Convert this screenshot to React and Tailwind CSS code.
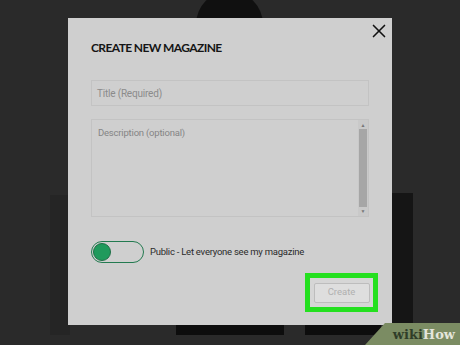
import { X } from "lucide-react";

export default function App() {
  return (
    <div className="relative h-[345px] w-[460px] overflow-hidden bg-[#2a2a2a] font-['Roboto',sans-serif]">
      {/* page behind the dialog */}
      <div className="absolute left-[196px] top-[-9px] h-[67px] w-[67px] rounded-full bg-[#101010]" />
      <div className="absolute left-[50px] top-[195px] h-[140px] w-[20px] bg-[#252525]" />
      <div className="absolute left-[390px] top-[193px] h-[142px] w-[23px] bg-[#151515]" />
      <div className="absolute left-[176px] top-[322px] h-[13px] w-[108px] bg-[#0d0d0d]" />
      <div className="absolute left-[305px] top-[322px] h-[13px] w-[76px] bg-[#0d0d0d]" />

      {/* dialog */}
      <div className="absolute left-[68px] top-[18px] flex h-[307px] w-[324px] flex-col bg-[#cfcfcf] px-[23px]">
        <button className="absolute right-[2px] top-[2px] text-[#111]">
          <X className="h-[22px] w-[22px]" strokeWidth={1.8} />
        </button>
        <h2 className="mt-[22px] font-['Lato',sans-serif] text-[12px] font-bold leading-[15px] tracking-[-0.6px] text-[#151515]">
          CREATE NEW MAGAZINE
        </h2>
        <div className="mt-[25px] flex h-[26px] w-[278px] items-center border border-[#c3c3c3] px-[5px] text-[10px] tracking-[-0.2px] text-[#8b8b8b]">
          Title (Required)
        </div>
        <div className="mt-[13px] flex h-[98px] w-[278px] border border-[#c3c3c3]">
          <div className="flex-1 px-[6px] pt-[6px] text-[9.5px] leading-[14px] tracking-[-0.2px] text-[#858585]">
            Description (optional)
          </div>
          <div className="flex w-[10px] flex-col items-center bg-[#c9c9c9] py-[1px]">
            <span className="text-[5px] leading-[8px] text-[#777]">▲</span>
            <div className="w-[8px] flex-1 bg-[#a6a6a6]" />
            <span className="text-[5px] leading-[8px] text-[#777]">▼</span>
          </div>
        </div>
        <div className="mt-[24px] flex items-center">
          <div className="flex h-[22px] w-[53px] items-center rounded-full border-[1.5px] border-[#237a50] px-[1px]">
            <div className="h-[18px] w-[18px] rounded-full border-[1.5px] border-[#1f6f47] bg-[#1f9a5c]" />
          </div>
          <span className="ml-[6px] text-[9.5px] tracking-[-0.25px] text-[#2b2b2b]">Public - Let everyone see my magazine</span>
        </div>
        <div className="mt-[10px] flex justify-end">
          <div className="mr-[-9px] flex h-[39px] w-[73px] items-center justify-center border-[5px] border-[#24e01f] bg-[#d6d6d6]">
            <button className="h-[20px] w-[56px] rounded-[2px] border border-[#bdbdbd] bg-[#dedede] text-[9.5px] text-[#b0b0b0]">
              Create
            </button>
          </div>
        </div>
      </div>

      {/* watermark */}
      <div className="absolute bottom-0 right-0 flex h-[22px] w-[95px] items-center justify-end bg-[#7b8c63] pr-[5px] [clip-path:polygon(20px_0,100%_0,100%_100%,0_100%)]">
        <span className="font-['DejaVu_Serif',serif] text-[13px] font-bold leading-none text-[#2f3d28]">wiki</span>
        <span className="font-['DejaVu_Serif',serif] text-[13px] font-bold leading-none text-[#e4e6dc]">How</span>
      </div>
    </div>
  );
}
